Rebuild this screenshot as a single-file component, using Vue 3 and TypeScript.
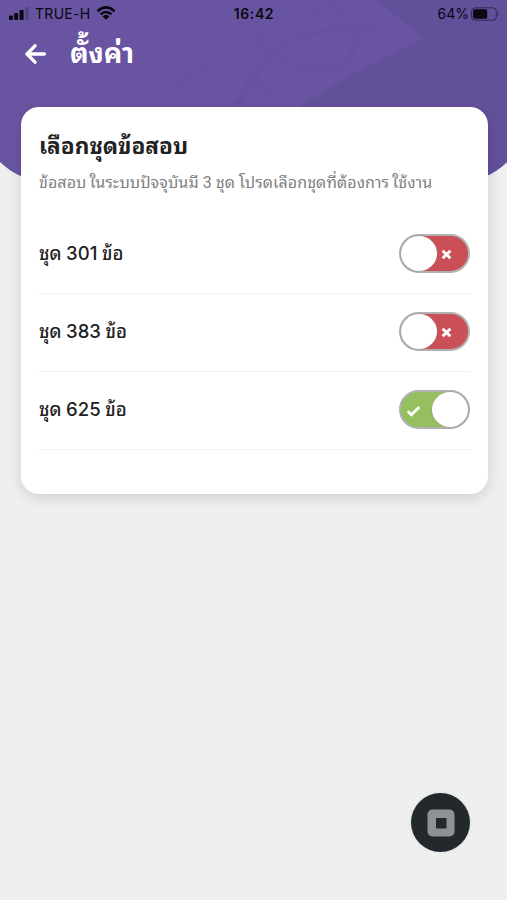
<script setup lang="ts">
import { ref } from 'vue'

interface ExamSet {
  id: number
  count: number
  enabled: boolean
}

const sets = ref<ExamSet[]>([
  { id: 1, count: 301, enabled: false },
  { id: 2, count: 383, enabled: false },
  { id: 3, count: 625, enabled: true },
])

function toggle(item: ExamSet): void {
  item.enabled = !item.enabled
}
</script>

<template>
  <div class="screen">
    <header class="hero">
      <svg class="hero-art" viewBox="0 0 507 182" aria-hidden="true">
        <path class="shade" d="M376 0 H549 V182 H220 L302 104 L350 76 L424 38 Z" />
        <g class="strokes">
          <path d="M328 0 L350 20 M306 27 L322 8" />
          <path d="M178 91 Q186 72 210 68" />
          <path d="M238 104 Q250 76 275 50 Q300 28 378 27" />
          <path d="M253 26 Q264 56 296 66 Q315 71 335 68 Q352 64 359 30" />
          <path d="M246 70 L272 94" />
        </g>
      </svg>
      <div class="status">
        <div class="status-left">
          <svg class="signal" viewBox="0 0 21 13">
            <rect x="0" y="8.5" width="4" height="4.5" rx="1" />
            <rect x="5.2" y="6" width="4" height="7" rx="1" />
            <rect x="10.6" y="3" width="4" height="10" rx="1" />
            <rect x="16" y="0" width="4" height="13" rx="1" opacity="0.2" />
          </svg>
          <span class="carrier">TRUE-H</span>
          <svg class="wifi" viewBox="0 0 20 14">
            <path d="M1.5 5.2 Q10 -2.4 18.5 5.2 M4.6 8.3 Q10 3.6 15.4 8.3" fill="none" stroke="#090711" stroke-width="2.5" />
            <path d="M6.5 10.3 Q10 7.2 13.5 10.3 L10 13.8 Z" />
          </svg>
        </div>
        <span class="clock">16:42</span>
        <div class="status-right">
          <span class="percent">64%</span>
          <svg class="battery" viewBox="0 0 30 14">
            <rect x="0.6" y="0.6" width="25.6" height="12.8" rx="3.4" fill="none" stroke="#090711" stroke-opacity="0.55" />
            <rect x="2.2" y="2.2" width="14.6" height="9.6" rx="1.8" />
            <path d="M27.6 4.7 Q30 7 27.6 9.3 Z" opacity="0.5" />
          </svg>
        </div>
      </div>
      <div class="titlebar">
        <svg class="back" viewBox="0 0 21 20">
          <path d="M10 1.8 L2 10 L10 18.2 M2.5 10 H19.5" fill="none" stroke="#fff" stroke-width="3.3" stroke-linecap="round" stroke-linejoin="round" />
        </svg>
        <h1 class="title">ตั้งค่า</h1>
      </div>
    </header>

    <main class="card">
      <h2 class="heading">เลือกชุดข้อสอบ</h2>
      <p class="hint">ข้อสอบ<span class="gap">ในระบบปัจจุบันมี 3 ชุด โปรดเลือกชุดที่ต้องการ</span><span class="gap">ใช้งาน</span></p>
      <ul class="list">
        <li v-for="item in sets" :key="item.id" class="row">
          <span class="label">ชุด <span class="count">{{ item.count }}</span> ข้อ</span>
          <button
            class="switch"
            :class="{ on: item.enabled }"
            type="button"
            role="switch"
            :aria-checked="item.enabled"
            @click="toggle(item)"
          >
            <span class="knob"></span>
            <svg v-if="item.enabled" class="check" viewBox="0 0 14 11">
              <path d="M1.6 5.8 L5 9 L12.4 1.8" />
            </svg>
            <svg v-else class="cross" viewBox="0 0 10 10">
              <path d="M1.5 1.5 L8.5 8.5 M8.5 1.5 L1.5 8.5" />
            </svg>
          </button>
        </li>
      </ul>
    </main>

    <button class="stop" type="button">
      <svg viewBox="0 0 28 28">
        <rect x="0.5" y="0.5" width="27" height="27" rx="5" fill="#8f9295" />
        <rect x="9" y="9" width="10.5" height="10.5" fill="#23292d" />
      </svg>
    </button>
  </div>
</template>

<style>
body {
  background: #efefef;
}
</style>

<style scoped>
* {
  box-sizing: border-box;
}

.screen {
  position: relative;
  height: 900px;
  overflow: hidden;
  background: #efefef;
  font-family: Roboto, "Noto Sans Thai Looped", "Noto Looped Thai", Loma, Garuda, Sarabun, Waree, "Noto Sans", sans-serif;
  color: #222;
}

.hero {
  position: relative;
  height: 182px;
  margin: 0 -21px;
  padding: 0 21px;
  overflow: hidden;
  border-radius: 0 0 70px 70px;
  background: #6954a2;
}

.hero-art {
  position: absolute;
  top: 0;
  left: 21px;
  width: 507px;
  height: 182px;
  overflow: visible;
}

.shade {
  fill: #63509b;
}

.strokes path {
  fill: none;
  stroke: #634f9c;
  stroke-width: 6;
  opacity: 0.5;
}

.status {
  position: relative;
  display: grid;
  grid-template-columns: 1fr auto 1fr;
  align-items: center;
  height: 27px;
  padding: 0 7px 0 9px;
  color: #090711;
  fill: #090711;
  font-family: Inter, sans-serif;
  font-size: 14px;
}

.status-left,
.status-right {
  display: flex;
  align-items: center;
}

.status-right {
  justify-content: flex-end;
}

.signal {
  width: 21px;
  height: 13px;
}

.carrier {
  margin-left: 5px;
  letter-spacing: 0.3px;
}

.wifi {
  width: 20px;
  height: 14px;
  margin: -2px 0 0 5px;
}

.clock {
  margin-right: 1px;
  font-weight: 600;
  letter-spacing: 0.6px;
}

.battery {
  width: 29px;
  height: 14px;
  margin-left: 2px;
}

.titlebar {
  position: relative;
  display: flex;
  align-items: center;
  height: 54px;
  padding-left: 25px;
}

.back {
  width: 21px;
  height: 20px;
}

.title {
  margin: 0 0 0 24px;
  color: #fff;
  font-size: 27.5px;
  font-weight: 700;
  line-height: 54px;
}

.card {
  position: relative;
  height: 387px;
  margin: -75px 19px 0 21px;
  padding: 20px 18px 0;
  border-radius: 18px;
  background: #fff;
  box-shadow: 0 4px 14px rgba(0, 0, 0, 0.13);
}

.heading {
  margin: 0;
  font-size: 22.6px;
  font-weight: 700;
  line-height: 39px;
  white-space: nowrap;
}

.hint {
  margin: 0;
  color: #808080;
  font-size: 16px;
  letter-spacing: 0.07px;
  line-height: 33px;
  white-space: nowrap;
}

.gap {
  margin-left: 3px;
}

.list {
  margin: 17px 0 0;
  padding: 0;
  list-style: none;
}

.row {
  display: flex;
  align-items: center;
  justify-content: space-between;
  height: 78px;
  padding-bottom: 2px;
  border-bottom: 1px solid #f1f1f1;
}

.label {
  padding-bottom: 1px;
  font-size: 18.5px;
  font-weight: 500;
  line-height: 30px;
  white-space: nowrap;
}

.count {
  font-family: Inter, sans-serif;
}

.switch {
  display: flex;
  flex-direction: row;
  align-items: center;
  width: 71px;
  height: 39px;
  margin: 0;
  padding: 0;
  border: 2px solid #b0b2b2;
  border-radius: 20px;
  background: #cb4f57;
}

.switch.on {
  flex-direction: row-reverse;
  background: #96c05f;
}

.knob {
  width: 36px;
  height: 35px;
  border-radius: 50%;
  background: #fff;
  box-shadow: 0 0 1px 1px rgba(150, 140, 140, 0.35);
}

.cross,
.check {
  fill: none;
  stroke: #fff;
  stroke-width: 2.6;
}

.cross {
  width: 11px;
  height: 11px;
  margin: 2px 0 0 4px;
}

.check {
  width: 15px;
  height: 12px;
  margin: 2px 11px 0 0;
}

.stop {
  position: absolute;
  right: 37px;
  bottom: 48px;
  display: flex;
  align-items: center;
  justify-content: center;
  width: 59px;
  height: 59px;
  padding: 0;
  border: 0;
  border-radius: 50%;
  background: #22282c;
  box-shadow: 0 0 2px 1px rgba(210, 225, 220, 0.6);
}

.stop svg {
  width: 28px;
  height: 28px;
}
</style>
